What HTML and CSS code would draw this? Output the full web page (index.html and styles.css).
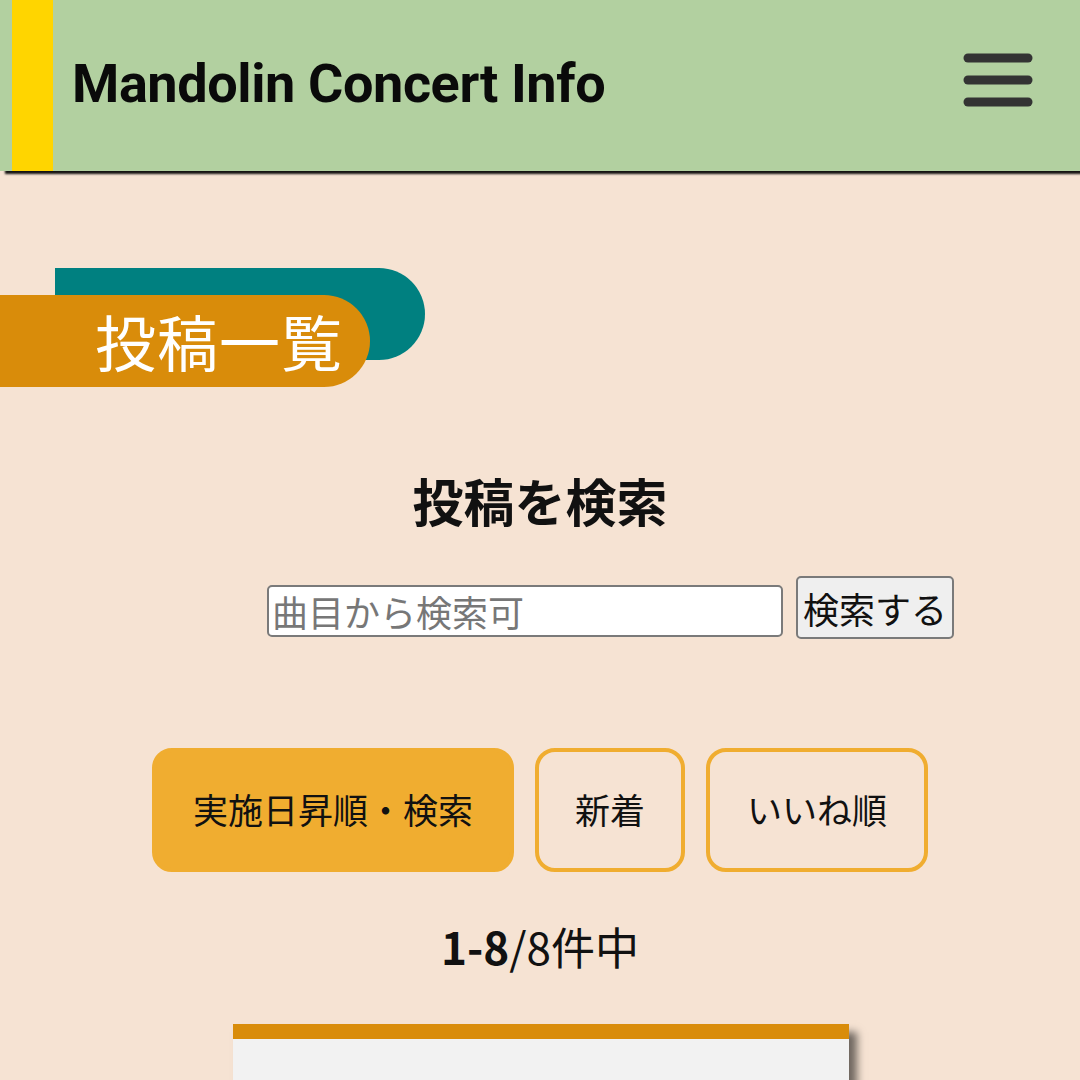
FILE: index.html
```html
<!DOCTYPE html>
<html lang="ja">
<head>
<meta charset="utf-8">
<title>Mandolin Concert Info</title>
<link rel="stylesheet" href="styles.css">
</head>
<body>
<header class="site-header">
  <div class="accent"></div>
  <h1 class="site-title">Mandolin Concert Info</h1>
  <button class="menu" aria-label="menu">
    <svg width="70" height="56" viewBox="0 0 70 56">
      <line x1="5" y1="5" x2="65" y2="5" stroke="#333" stroke-width="9" stroke-linecap="round"/>
      <line x1="5" y1="27" x2="65" y2="27" stroke="#333" stroke-width="9" stroke-linecap="round"/>
      <line x1="5" y1="49" x2="65" y2="49" stroke="#333" stroke-width="9" stroke-linecap="round"/>
    </svg>
  </button>
</header>
<main class="main">
  <div class="page-heading">
    <h2 class="page-title">投稿一覧</h2>
  </div>
  <h3 class="search-title">投稿を検索</h3>
  <form class="search-form">
    <input class="search-input" type="text" placeholder="曲目から検索可">
    <button class="search-btn" type="button">検索する</button>
  </form>
  <div class="sort-row">
    <a class="sort-btn active">実施日昇順・検索</a>
    <a class="sort-btn">新着</a>
    <a class="sort-btn">いいね順</a>
  </div>
  <p class="count"><b>1-8</b>/8件中</p>
  <div class="card"></div>
</main>
</body>
</html>
```

FILE: styles.css
```css
html, body {
  margin: 0;
  padding: 0;
}
body {
  background: #f6e3d3;
  font-family: "Noto Sans CJK JP", "Noto Sans", sans-serif;
  color: #111;
  overflow: hidden;
  height: 1080px;
}
.site-header {
  height: 171px;
  background: #b2d0a0;
  display: flex;
  align-items: center;
  padding-left: 12px;
  box-shadow: 5px 3px 2px rgba(0, 0, 0, 0.92);
  position: relative;
  z-index: 1;
}
.accent {
  width: 41px;
  align-self: stretch;
  background: #ffd500;
}
.site-title {
  margin: 0 0 0 19px;
  font-family: Roboto, "Noto Sans", sans-serif;
  font-weight: 700;
  font-size: 54px;
  letter-spacing: -0.4px;
  color: #0a0a0a;
  flex: 1;
  position: relative;
  top: -2px;
}
.menu {
  border: 0;
  background: none;
  padding: 0;
  margin-right: 47px;
  width: 70px;
  height: 56px;
  position: relative;
  top: -5px;
}
.menu svg {
  display: block;
}
.main {
  display: flex;
  flex-direction: column;
}
.page-heading {
  margin-top: 97px;
  padding-top: 27px;
  position: relative;
  height: 92px;
}
.page-heading::before {
  content: "";
  position: absolute;
  left: 55px;
  top: 0;
  width: 370px;
  height: 92px;
  background: #008080;
  border-radius: 0 46px 46px 0;
}
.page-title {
  position: relative;
  margin: 0;
  width: 275px;
  height: 92px;
  padding-left: 95px;
  background: #d98c0a;
  border-radius: 0 46px 46px 0;
  color: #fff;
  font-weight: 400;
  font-size: 61px;
  line-height: 92px;
  letter-spacing: 1px;
}
.search-title {
  margin: 77px 0 0;
  text-align: center;
  font-size: 51px;
  font-weight: 700;
  line-height: 72px;
  color: #111;
}
.search-form {
  display: flex;
  align-items: flex-end;
  padding-left: 267px;
  margin-top: 40px;
  gap: 13px;
}
.search-input {
  width: 516px;
  height: 52px;
  box-sizing: border-box;
  border: 2px solid #7a7a7a;
  border-radius: 5px;
  background: #fff;
  font-family: "Noto Sans CJK JP", sans-serif;
  font-size: 36px;
  padding: 0 3px;
  margin-bottom: 2px;
}
.search-input::placeholder {
  color: #777;
}
.search-btn {
  width: 158px;
  height: 63px;
  box-sizing: border-box;
  border: 2px solid #7a7a7a;
  border-radius: 5px;
  background: #efefef;
  font-family: "Noto Sans CJK JP", sans-serif;
  font-size: 36px;
  color: #111;
  padding: 0;
}
.sort-row {
  display: flex;
  justify-content: center;
  gap: 21px;
  margin-top: 109px;
}
.sort-btn {
  height: 124px;
  box-sizing: border-box;
  border: 4px solid #f0ad30;
  border-radius: 20px;
  display: flex;
  align-items: center;
  justify-content: center;
  font-size: 35px;
  color: #111;
  padding-bottom: 3px;
}
.sort-btn:nth-child(1) {
  width: 362px;
}
.sort-btn:nth-child(2) {
  width: 150px;
}
.sort-btn:nth-child(3) {
  width: 222px;
}
.sort-btn.active {
  background: #f0ad30;
}
.count {
  margin: 47px 0 0;
  text-align: center;
  font-size: 44px;
  line-height: 54px;
  color: #111;
}
.count b {
  font-weight: 700;
}
.card {
  margin: 51px 0 0 233px;
  width: 616px;
  height: 200px;
  border-top: 15px solid #d98c0a;
  background: #f2f2f2;
  box-shadow: 8px 8px 8px rgba(0, 0, 0, 0.55);
}
```
